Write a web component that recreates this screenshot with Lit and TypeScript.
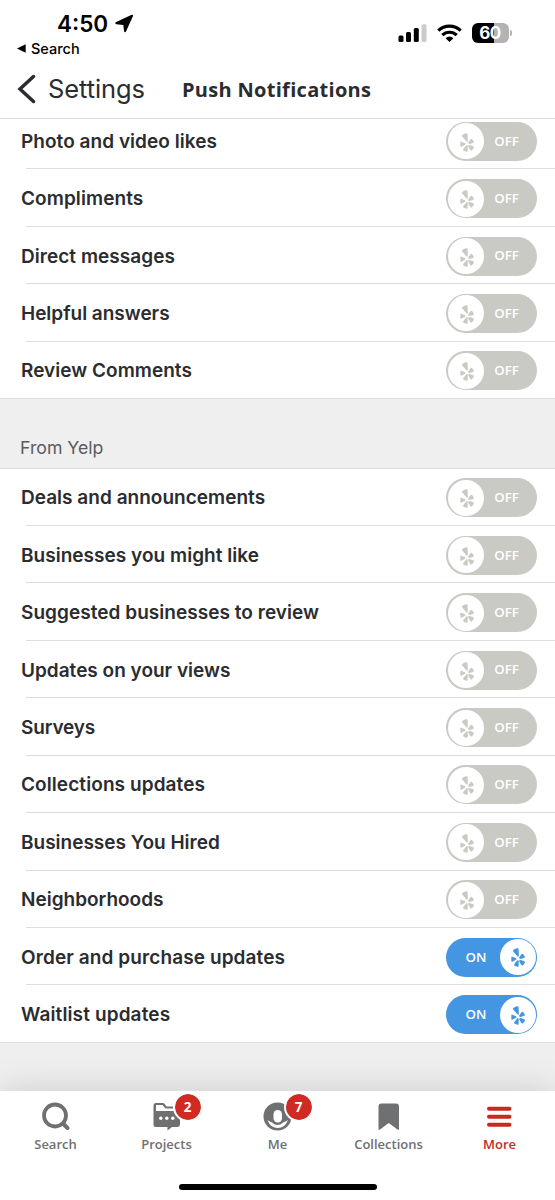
import { LitElement, html, svg, css } from "lit";
import { customElement, property } from "lit/decorators.js";
import { classMap } from "lit/directives/class-map.js";

const burst = svg`
  <path d="M7 6 Q13 2 19 1 Q23 1 23 5 L23.500 23 Q23 28 19 25 L6 10 Q5 8 7 6Z"/>
  <path d="M4 26 L15 31 Q18 33.500 15 35.500 L4 41 Q1 42 1 38 L1 29 Q1 25 4 26Z"/>
  <path d="M23 39 L23 53 Q23 57 19 56 L11 53 Q8 51 10 48 L18 38 Q22 34 23 39Z"/>
  <path d="M29 36 L40 40 Q43 42 41 45 L36 52 Q33 54 31 51 L25 41 Q24 35 29 36Z"/>
  <path d="M25 28 L32 18 Q34 16 36 18 L41 25 Q43 29 39 30 L28 33 Q23 32 25 28Z"/>`;

@customElement("yelp-toggle")
export class YelpToggle extends LitElement {
  @property({ type: Boolean }) on = false;

  static styles = css`
    :host { display: block; }
    .track {
      box-sizing: border-box; width: 91px; height: 39px; border-radius: 20px;
      background: #c9cac4; padding: 1px 1.5px; display: flex; align-items: center;
      color: #fff; font: 600 13.300px/1 "Open Sans", sans-serif;
    }
    .track.on { background: #4496e2; flex-direction: row-reverse; }
    .knob {
      width: 36px; height: 36px; border-radius: 50%; background: #fff; flex: none;
      display: flex; align-items: center; justify-content: center;
    }
    .knob svg { width: 14px; height: 19px; fill: #c9cac4; margin-top: 2px; margin-left: 2px; }
    .on .knob svg { fill: #4496e2; margin-top: 1px; margin-left: 1px; }
    .word { flex: 1; text-align: center; padding-right: 6px; }
    .on .word { padding: 0 0 0 5px; }
  `;

  render() {
    return html`<div class=${classMap({ track: true, on: this.on })}>
      <span class="knob"><svg viewBox="0 0 42 57">${burst}</svg></span>
      <span class="word">${this.on ? "ON" : "OFF"}</span>
    </div>`;
  }
}

interface Row { label: string; spacing: number; on?: boolean }

const activity: Row[] = [
  { label: "Photo and video likes", spacing: 0.04 },
  { label: "Compliments", spacing: 0.08 },
  { label: "Direct messages", spacing: 0.04 },
  { label: "Helpful answers", spacing: -0.02 },
  { label: "Review Comments", spacing: 0.03 },
];

const fromYelp: Row[] = [
  { label: "Deals and announcements", spacing: 0.02 },
  { label: "Businesses you might like", spacing: 0.03 },
  { label: "Suggested businesses to review", spacing: 0.04 },
  { label: "Updates on your views", spacing: 0 },
  { label: "Surveys", spacing: -0.15 },
  { label: "Collections updates", spacing: 0.09 },
  { label: "Businesses You Hired", spacing: 0 },
  { label: "Neighborhoods", spacing: 0 },
  { label: "Order and purchase updates", spacing: 0.1, on: true },
  { label: "Waitlist updates", spacing: 0.12, on: true },
];

@customElement("app-root")
export class AppRoot extends LitElement {
  static styles = css`
    :host {
      display: flex; flex-direction: column; width: 555px; height: 1200px; overflow: hidden;
      background: #efefef; color: #2b2c2f; font-family: Inter, "Liberation Sans", sans-serif;
    }
    svg { display: block; }
    .top { height: 118px; flex: none; background: #fff; border-bottom: 1px solid #dcdcdc; z-index: 1; }
    .status { display: flex; justify-content: space-between; height: 60px; color: #000; }
    .clock { display: flex; align-items: center; gap: 7px; padding: 10px 0 0 57px; height: 27px; font-size: 22.5px; font-weight: 600; }
    .back-app { display: flex; align-items: center; gap: 5px; padding: 3px 0 0 17px; height: 16px; font-size: 14.5px; font-weight: 500; }
    .signals { display: flex; align-items: center; gap: 10px; padding: 23px 43px 0 0; height: 20px; }
    .battery { display: flex; align-items: center; gap: 1.5px; }
    .cell {
      width: 37px; height: 20px; border-radius: 6px; color: #fff; font-size: 17px; font-weight: 700;
      line-height: 20px; text-align: center; letter-spacing: -0.5px;
      background: linear-gradient(90deg, #000 60%, #b3b3b3 60%);
    }
    .nub { width: 2px; height: 6px; border-radius: 0 3px 3px 0; background: #b3b3b3; }
    .nav { display: flex; align-items: center; height: 58px; }
    .chevron { margin-left: 17px; }
    .back { font-size: 25.500px; line-height: 31px; width: 134px; margin-left: 12px; margin-top: -2px; letter-spacing: -0.1px; font-weight: 400; }
    .title { font: 700 20px/32px "Open Sans", sans-serif; letter-spacing: 0.3px; margin-top: 1px; }

    .group { flex: none; background: #fff; }
    .first { margin-top: -7px; }
    .row {
      display: flex; align-items: center; justify-content: space-between; box-sizing: border-box;
      height: 57.43px; padding: 1px 18px 0 21px; font-size: 19px; font-weight: 600; white-space: nowrap;
      background: linear-gradient(#dedede, #dedede) right bottom / 529px 1px no-repeat;
    }
    .row:last-child { background-size: 555px 1px; }
    .section { flex: none; box-sizing: border-box; height: 69.500px; padding: 36px 20px 0; font-size: 17.700px; line-height: 26px; color: #5b5b5e; border-bottom: 1px solid #dcdcdc; }
    .filler { flex: 1; min-height: 0; }

    .tabs { flex: none; height: 109px; background: #fff; box-shadow: 0 0 36px rgba(0,0,0,.15); display: flex; flex-direction: column; justify-content: space-between; align-items: center; }
    .items { width: 555px; display: grid; grid-template-columns: repeat(5, 111px); }
    .tab { display: flex; flex-direction: column; align-items: center; color: #6e7072; font: 600 13px/18px "Open Sans", sans-serif; padding-top: 10px; }
    .tab.active { color: #c9291f; }
    .icon { position: relative; height: 32px; margin-bottom: 2px; }
    .badge {
      position: absolute; left: 22px; top: -9.500px; width: 26px; height: 26px; border-radius: 50%;
      border: 2px solid #fff; background: #d02b22; background-clip: padding-box; color: #fff; text-align: center; font: 700 13.500px/26px "Open Sans", sans-serif;
    }
    .home { width: 198px; height: 6px; border-radius: 3px; background: #000; margin-bottom: 10.500px; }
  `;

  private rows(list: Row[]) {
    return list.map((r) => html`<div class="row">
      <span style="letter-spacing:${r.spacing}px">${r.label}</span>
      <yelp-toggle ?on=${r.on}></yelp-toggle>
    </div>`);
  }

  private tab(label: string, icon: unknown, badge = "", active = false) {
    return html`<div class=${classMap({ tab: true, active })}>
      <div class="icon"><svg width="32" height="32" viewBox="0 0 32 32">${icon}</svg>
      ${badge ? html`<span class="badge">${badge}</span>` : ""}</div>
      <span>${label}</span>
    </div>`;
  }

  render() {
    return html`
      <header class="top">
        <div class="status">
          <div>
            <div class="clock"><span>4:50</span>
              <svg width="19" height="19" viewBox="0 0 19 19"><path d="M17.900 2.200 11 17.500Q9.800 19.200 9 17L8.300 11 1.400 10.300Q-.7 9.300 1.200 8L16.200.900Q18.600 0 17.900 2.200Z"/></svg>
            </div>
            <div class="back-app"><svg width="9" height="9" viewBox="0 0 9 9"><path d="M0 4.500 8.700.200V8.800Z"/></svg><span>Search</span></div>
          </div>
          <div class="signals">
            <svg width="29" height="19" viewBox="0 0 29 19"><rect x="0.500" y="11.500" width="5" height="6.500" rx="1.500"/><rect x="8" y="8" width="5" height="10" rx="1.500"/><rect x="15.800" y="4" width="5" height="14" rx="1.500"/><rect x="23.500" y="0.300" width="5" height="17.700" rx="1.500" fill="#cbcbcb"/></svg>
            <svg width="25" height="19" viewBox="0 0 25 19"><g fill="none" stroke="#000" stroke-width="3.200"><path d="M1.300 6.700A16 16 0 0 1 23.700 6.700"/><path d="M5.300 11.200A10.300 10.300 0 0 1 19.700 11.200"/></g><path d="M8.600 14.200A6 6 0 0 1 16.400 14.200L12.500 18Z"/></svg>
            <div class="battery"><div class="cell">60</div><div class="nub"></div></div>
          </div>
        </div>
        <div class="nav">
          <svg class="chevron" width="19" height="31" viewBox="0 0 19 31"><path d="M16.500 2.500 3 15 16.500 27.500" fill="none" stroke="#2b2c2f" stroke-width="3.500" stroke-linecap="round"/></svg>
          <span class="back">Settings</span>
          <span class="title">Push Notifications</span>
        </div>
      </header>
      <section class="group first">${this.rows(activity)}</section>
      <div class="section">From Yelp</div>
      <section class="group">${this.rows(fromYelp)}</section>
      <div class="filler"></div>
      <nav class="tabs">
        <div class="items">
          ${this.tab("Search", svg`<circle cx="15" cy="14.500" r="11" fill="none" stroke="#6e7072" stroke-width="3.800"/><path d="M23 22.500 27.500 27" stroke="#6e7072" stroke-width="4" stroke-linecap="round"/>`)}
          ${this.tab("Projects", svg`<path fill="#6e7072" fill-rule="evenodd" d="M5 2H12Q13 2 13.700 3L15.500 5.500H26Q29 5.500 29 8V23Q29 26 26 26H21L16.500 29.500V26H5Q2.500 26 2.500 23.500V5Q2.500 2 5 2ZM5 10H27V7.500H14.500L11.500 4H5Z"/><g fill="#fff"><circle cx="9.800" cy="17.300" r="1.700"/><circle cx="15.800" cy="17.300" r="1.700"/><circle cx="21.800" cy="17.300" r="1.700"/></g>`, "2")}
          ${this.tab("Me", svg`<circle cx="15.500" cy="15.500" r="14" fill="#6e7072"/><rect x="11.500" y="9" width="8.500" height="12.500" rx="4.250" fill="#fff"/><path d="M5.500 19Q8 20.500 10 21.500 15.500 26.500 21 21.500 23.500 20.500 26 19 23 27 15.700 27 8.500 27 5.500 19Z" fill="#fff"/>`, "7")}
          ${this.tab("Collections", svg`<path fill="#6e7072" d="M8.500 2.500H23Q26 2.500 26 5.500V28Q26 29.500 24.500 28.500L15.700 22 7 28.500Q5.500 29.500 5.500 28V5.500Q5.500 2.500 8.500 2.500Z"/>`)}
          ${this.tab("More", svg`<path d="M5 7.800H25.500M5 15.800H25.500M5 23.700H25.500" stroke="#c9291f" stroke-width="4" stroke-linecap="round"/>`, "", true)}
        </div>
        <div class="home"></div>
      </nav>
    `;
  }
}
